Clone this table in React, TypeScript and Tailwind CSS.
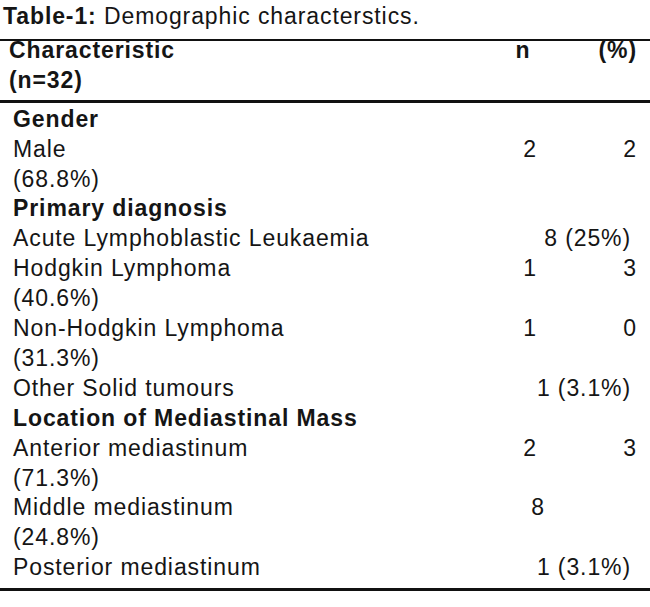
import React from 'react';

type Row = {
  label: string;
  bold?: boolean;
  n?: string;
  pct?: string;
  merged?: string;
  nShift?: boolean;
};

const rows: Row[] = [
  { label: 'Gender', bold: true },
  { label: 'Male', n: '2', pct: '2' },
  { label: '(68.8%)' },
  { label: 'Primary diagnosis', bold: true },
  { label: 'Acute Lymphoblastic Leukaemia', merged: '8 (25%)' },
  { label: 'Hodgkin Lymphoma', n: '1', pct: '3' },
  { label: '(40.6%)' },
  { label: 'Non-Hodgkin Lymphoma', n: '1', pct: '0' },
  { label: '(31.3%)' },
  { label: 'Other Solid tumours', merged: '1 (3.1%)' },
  { label: 'Location of Mediastinal Mass', bold: true },
  { label: 'Anterior mediastinum', n: '2', pct: '3' },
  { label: '(71.3%)' },
  { label: 'Middle mediastinum', n: '8', nShift: true },
  { label: '(24.8%)' },
  { label: 'Posterior mediastinum', merged: '1 (3.1%)' },
];

const TableRow = ({ row }: { row: Row }) => {
  return (
    <div className="grid grid-cols-[480px_100px_70px] h-[29.9px]">
      <div className={`pl-[13px] whitespace-nowrap ${row.bold ? 'font-bold' : ''}`}>{row.label}</div>
      {row.merged ? (
        <div className="col-span-2 text-right pr-[19px] whitespace-nowrap">{row.merged}</div>
      ) : (
        <>
          <div className={`text-center ${row.nShift ? 'pl-[16px]' : ''}`}>{row.n}</div>
          <div className="text-right pr-[13px]">{row.pct}</div>
        </>
      )}
    </div>
  );
};

export default function App() {
  return (
    <div
      className="w-[650px] h-[607px] bg-white text-[#151515] text-[23px] leading-[29.9px] tracking-[0.9px] overflow-hidden"
      style={{ fontFamily: '"Liberation Sans", Arial, sans-serif' }}
    >
      {/* Caption */}
      <div className="h-[39px] pt-[2px] pl-[3px] whitespace-nowrap">
        <span className="font-bold">Table-1:</span> Demographic characterstics.
      </div>
      <div className="h-[2px] bg-[#111]"></div>

      {/* Header */}
      <div className="-mt-[5px] grid grid-cols-[480px_100px_70px] font-bold">
        <div className="pl-[9px]">
          <div>Characteristic</div>
          <div>(n=32)</div>
        </div>
        <div className="text-center pr-[14px]">n</div>
        <div className="text-right pr-[13px]">(%)</div>
      </div>
      <div className="mt-[4px] h-[3px] bg-[#111]"></div>

      {/* Body */}
      <div className="pt-[2px]">
        {rows.map((row, i) => (
          <TableRow key={i} row={row} />
        ))}
      </div>
      <div className="mt-[5px] h-[3px] bg-[#111]"></div>
    </div>
  );
}
